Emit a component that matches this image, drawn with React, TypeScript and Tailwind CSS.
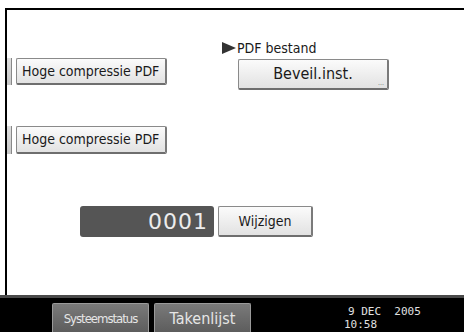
import React from "react";

const cond = { fontFamily: '"DejaVu Sans Condensed", "DejaVu Sans", sans-serif' };

function LightButton({ className, children }: { className: string; children: React.ReactNode }) {
  return (
    <div
      className={
        "rounded-[2px] border border-[#8a8a8a] border-b-2 border-r-2 border-b-[#6e6e6e] border-r-[#7a7a7a] bg-gradient-to-b from-[#fbfbfb] to-[#e2e2e2] text-[#1a1a1a] " +
        className
      }
      style={cond}
    >
      {children}
    </div>
  );
}

export default function App() {
  return (
    <div className="w-[464px] h-[332px] bg-white flex flex-col overflow-hidden">
      <div className="flex-1 pt-[8px] pl-[5px] flex flex-col">
        <div className="flex-1 border-t-2 border-l-2 border-black flex flex-col">
          {/* Row 1 */}
          <div className="flex items-start">
            <div className="mt-[48px] flex items-stretch">
              <div className="w-[5px] h-[27px] bg-gradient-to-b from-[#e0e0e0] to-[#c8c8c8] border-r border-[#888]" />
              <LightButton className="ml-[4px] w-[151px] h-[27px] flex items-center pl-[5px] text-[14px]">
                Hoge compressie PDF
              </LightButton>
            </div>
            <div className="ml-[55px] mt-[31px] flex flex-col">
              <div className="flex items-center h-[14px] text-[14px] leading-[14px] text-[#1a1a1a]" style={cond}>
                <svg width="14" height="12" viewBox="0 0 14 12" className="mr-[1px]">
                  <polygon points="0,0 14,6 0,12" fill="#333" />
                </svg>
                PDF bestand
              </div>
              <LightButton className="relative mt-[4px] ml-[16px] w-[151px] h-[31px] flex items-center justify-center text-[16px]">
                Beveil.inst.
                <span className="absolute right-[3px] bottom-[1px] text-[7px] leading-[7px] text-[#777]">...</span>
              </LightButton>
            </div>
          </div>
          {/* Row 2 */}
          <div className="mt-[36px] flex items-stretch">
            <div className="w-[5px] h-[28px] bg-gradient-to-b from-[#e0e0e0] to-[#c8c8c8] border-r border-[#888]" />
            <LightButton className="ml-[4px] w-[151px] h-[28px] flex items-center pl-[5px] text-[14px]">
              Hoge compressie PDF
            </LightButton>
          </div>
          {/* Row 3 */}
          <div className="mt-[52px] ml-[73px] flex items-stretch">
            <div
              className="w-[134px] h-[31px] rounded-[3px] bg-[#555] flex items-center justify-end pr-[6px] text-[22px] text-[#ececec] tracking-[1px]"
              style={{ fontFamily: '"DejaVu Sans", sans-serif' }}
            >
              0001
            </div>
            <LightButton className="ml-[4px] w-[95px] h-[31px] flex items-center justify-center text-[14px]">
              Wijzigen
            </LightButton>
          </div>
        </div>
      </div>
      <div className="h-[3px] bg-[#4a4a4a]" />
      <div className="h-[34px] bg-black flex items-start pt-[5px] pl-[52px] overflow-hidden">
        <div
          className="w-[97px] h-[32px] rounded-t-[2px] border-t border-l border-r border-[#9a9a9a] bg-gradient-to-b from-[#7a7a7a] to-[#5a5a5a] flex items-center justify-center pb-[2px] text-[13px] tracking-[-1px] text-[#e6e6e6]"
          style={cond}
        >
          Systeemstatus
        </div>
        <div
          className="ml-[5px] w-[97px] h-[32px] rounded-t-[2px] border-t border-l border-r border-[#9a9a9a] bg-gradient-to-b from-[#7a7a7a] to-[#5a5a5a] flex items-center justify-center pb-[2px] text-[16px] text-[#e6e6e6]"
          style={cond}
        >
          Takenlijst
        </div>
        <div
          className="ml-[93px] mt-[2px] flex flex-col text-[11px] leading-[13px] text-[#e0e0e0] whitespace-pre"
          style={{ fontFamily: '"DejaVu Sans Mono", monospace' }}
        >
          <span className="pl-[4px]">9 DEC  2005</span>
          <span>10:58</span>
        </div>
      </div>
    </div>
  );
}
